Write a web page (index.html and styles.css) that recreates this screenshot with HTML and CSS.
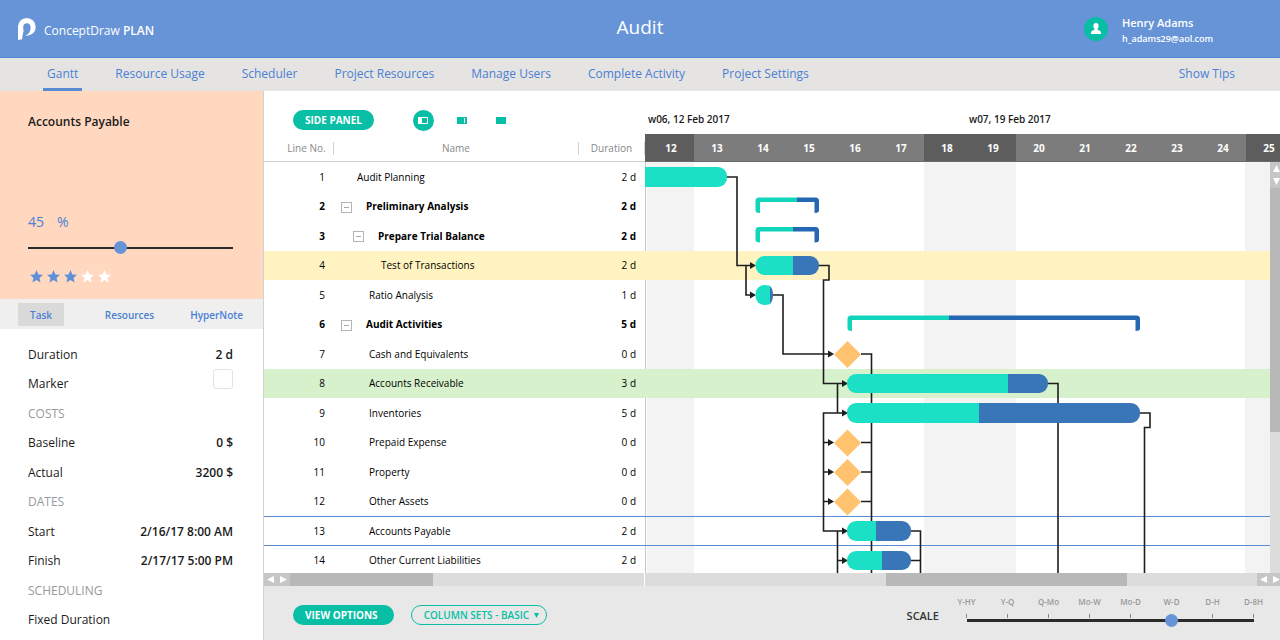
FILE: index.html
```html
<!DOCTYPE html>
<html lang="en">
<head>
    <meta charset="utf-8">
    <title>Audit - ConceptDraw PLAN</title>
    <link rel="stylesheet" href="styles.css">
</head>
<body>
    <header class="topbar">
        <div class="brand">
            <svg class="logo" width="18" height="22" viewBox="0 0 18 22">
                <path fill="#fff" d="M0 22V9A8.8 8.8 0 0 1 8.9 0 8.8 8.8 0 0 1 17.7 8.8C17.7 14.2 13.6 18 7.2 17.8 10.6 16.4 12.6 13.6 12.6 9.4A3.8 3.8 0 0 0 8.9 5.2C6.6 5.2 5.2 6.8 5.2 9.2 5.2 12 6 12.500 5 15.500 4.400 17.500 4.300 19 4.300 21.200Z"/>
            </svg>
            <span>ConceptDraw <b>PLAN</b></span>
        </div>
        <h1>Audit</h1>
        <div class="user">
            <svg class="avatar" width="24" height="24" viewBox="0 0 24 24">
                <circle cx="12" cy="12" r="12" fill="#08bea5"/>
                <path fill="#fff" d="M12 6a2.600 2.800 0 0 1 2.600 2.900c0 1.300-.6 2.300-1.200 2.900v.9c2 .5 3.600 1.300 3.600 3.300v1H7v-1c0-2 1.600-2.800 3.600-3.300v-.9c-.6-.6-1.200-1.600-1.200-2.900A2.600 2.800 0 0 1 12 6z"/>
            </svg>
            <div class="user-info">
                <div class="user-name">Henry Adams</div>
                <div class="user-mail">h_adams29@aol.com</div>
            </div>
        </div>
    </header>

    <nav class="tabs">
        <a href="#" class="active">Gantt</a>
        <a href="#">Resource Usage</a>
        <a href="#">Scheduler</a>
        <a href="#">Project Resources</a>
        <a href="#">Manage Users</a>
        <a href="#">Complete Activity</a>
        <a href="#">Project Settings</a>
        <a href="#" class="tips">Show Tips</a>
    </nav>

    <div class="workspace">
        <aside class="sidebar">
            <section class="task-card">
                <h2>Accounts Payable</h2>
                <label class="percent" for="complete"><span>45</span><span>%</span></label>
                <input type="range" id="complete" class="slider" min="0" max="100" value="45">
                <svg class="stars" width="84" height="13" viewBox="0 0 84 13">
                    <defs>
                        <path id="star" d="M6.500 0l1.900 4.400 4.600.4-3.500 3.100 1.100 4.700-4.100-2.500-4.100 2.500 1.100-4.700L0 4.800l4.600-.4z"/>
                    </defs>
                    <g fill="#5f90d8">
                        <use href="#star"/>
                        <use href="#star" x="17"/>
                        <use href="#star" x="34"/>
                    </g>
                    <g fill="#fff">
                        <use href="#star" x="51"/>
                        <use href="#star" x="68"/>
                    </g>
                </svg>
            </section>

            <div class="side-tabs">
                <button class="active">Task</button>
                <button class="push">Resources</button>
                <button>HyperNote</button>
            </div>

            <div class="props">
                <div class="prop"><span>Duration</span><b>2 d</b></div>
                <div class="prop"><label for="marker">Marker</label><input type="checkbox" id="marker"></div>
                <div class="prop group">COSTS</div>
                <div class="prop"><span>Baseline</span><b>0 $</b></div>
                <div class="prop"><span>Actual</span><b>3200 $</b></div>
                <div class="prop group">DATES</div>
                <div class="prop"><span>Start</span><b>2/16/17 8:00 AM</b></div>
                <div class="prop"><span>Finish</span><b>2/17/17 5:00 PM</b></div>
                <div class="prop group">SCHEDULING</div>
                <div class="prop"><span>Fixed Duration</span></div>
            </div>
        </aside>

        <main class="main">
            <div class="panes">
                <section class="outline">
                    <div class="toolbar">
                        <button class="pill">SIDE PANEL</button>
                        <button class="view view-on" aria-label="Left panel">
                            <svg width="10" height="7"><path fill="none" stroke="#fff" d="M.5.5h9v6h-9z"/><path fill="#fff" d="M0 0h4v7H0z"/></svg>
                        </button>
                        <button class="view" aria-label="Right panel">
                            <svg width="10" height="7"><path fill="#08bea5" d="M0 0h10v7H0z"/><path fill="#fff" d="M7 1h1v5H7z"/></svg>
                        </button>
                        <button class="view" aria-label="Full width">
                            <svg width="10" height="7"><path fill="#08bea5" d="M0 0h10v7H0z"/></svg>
                        </button>
                    </div>
                    <div class="rows">
                        <table>
                            <thead>
                                <tr>
                                    <th class="col-line"><span>Line No.</span></th>
                                    <th class="col-name"><span>Name</span></th>
                                    <th class="col-duration"><span>Duration</span></th>
                                </tr>
                            </thead>
                            <tbody>
                                <tr><td>1</td><td class="task">Audit Planning</td><td>2 d</td></tr>
                                <tr class="summary"><td>2</td><td class="level-1"><button class="toggle" aria-label="Collapse"></button>Preliminary Analysis</td><td>2 d</td></tr>
                                <tr class="summary"><td>3</td><td class="level-2"><button class="toggle" aria-label="Collapse"></button>Prepare Trial Balance</td><td>2 d</td></tr>
                                <tr class="yellow"><td>4</td><td class="task level-2">Test of Transactions</td><td>2 d</td></tr>
                                <tr><td>5</td><td class="task level-1">Ratio Analysis</td><td>1 d</td></tr>
                                <tr class="summary"><td>6</td><td class="level-1"><button class="toggle" aria-label="Collapse"></button>Audit Activities</td><td>5 d</td></tr>
                                <tr><td>7</td><td class="task level-1">Cash and Equivalents</td><td>0 d</td></tr>
                                <tr class="green"><td>8</td><td class="task level-1">Accounts Receivable</td><td>3 d</td></tr>
                                <tr><td>9</td><td class="task level-1">Inventories</td><td>5 d</td></tr>
                                <tr><td>10</td><td class="task level-1">Prepaid Expense</td><td>0 d</td></tr>
                                <tr><td>11</td><td class="task level-1">Property</td><td>0 d</td></tr>
                                <tr><td>12</td><td class="task level-1">Other Assets</td><td>0 d</td></tr>
                                <tr class="selected"><td>13</td><td class="task level-1">Accounts Payable</td><td>2 d</td></tr>
                                <tr><td>14</td><td class="task level-1">Other Current Liabilities</td><td>2 d</td></tr>
                            </tbody>
                        </table>
                    </div>
                    <div class="hscroll">
                        <svg class="arrows" width="26" height="13"><path fill="#fff" d="M10 3v7L3 6.500zM16 3v7l7-3.500z"/></svg>
                        <div class="thumb"></div>
                    </div>
                </section>

                <section class="chart">
                    <div class="weeks">
                        <span>w06, 12 Feb 2017</span>
                        <span>w07, 19 Feb 2017</span>
                    </div>
                    <div class="days">
                        <span class="weekend">12</span>
                        <span>13</span>
                        <span>14</span>
                        <span>15</span>
                        <span>16</span>
                        <span>17</span>
                        <span class="weekend">18</span>
                        <span class="weekend">19</span>
                        <span>20</span>
                        <span>21</span>
                        <span>22</span>
                        <span>23</span>
                        <span>24</span>
                        <span class="weekend">25</span>
                    </div>
                    <div class="chart-body">
                        <svg class="bars" height="411">
                            <defs>
                                <path id="arrow" d="M0 0l-6-3.500v7z"/>
                                <path id="milestone" d="M0-13.500L13.500 0 0 13.500-13.500 0z"/>
                            </defs>

                            <!-- weekends -->
                            <g fill="#f3f3f3">
                                <rect x="2" width="47" height="411"/>
                                <rect x="279" width="92" height="411"/>
                                <rect x="600" width="46" height="411"/>
                            </g>

                            <!-- marked rows -->
                            <rect y="89" width="100%" height="29" fill="#fff4c1"/>
                            <rect y="207" width="100%" height="29" fill="#d6f1cc"/>
                            <rect y="354" width="100%" height="1" fill="#5b8bd2"/>
                            <rect y="383" width="100%" height="1" fill="#5b8bd2"/>

                            <!-- links -->
                            <g fill="none" stroke="#1e1e1e" stroke-width="1.600">
                                <path d="M82 15H92V103.500H108"/>
                                <path d="M101 103.500V133H108"/>
                                <path d="M174 103.500H184V118H178.500V221.500H200"/>
                                <path d="M128 133H138V192H187"/>
                                <path d="M216 192H226.500V411"/>
                                <path d="M192.500 221.500V251"/>
                                <path d="M200 251H178.500V369H200"/>
                                <path d="M178.500 280.500H187M178.500 310H187M178.500 339.500H187"/>
                                <path d="M216 280.500H226.500M216 310H226.500M216 339.500H226.500"/>
                                <path d="M192.500 369V411M192.500 398.500H200"/>
                                <path d="M403 221.500H413V411"/>
                                <path d="M495 251H505V265.500H499.500V411"/>
                                <path d="M266 369H275.500V411M266 398.500H275.500"/>
                            </g>
                            <g fill="#1e1e1e">
                                <use href="#arrow" x="111" y="103.500"/>
                                <use href="#arrow" x="111" y="133"/>
                                <use href="#arrow" x="189" y="192"/>
                                <use href="#arrow" x="203" y="221.500"/>
                                <use href="#arrow" x="203" y="251"/>
                                <use href="#arrow" x="189" y="280.500"/>
                                <use href="#arrow" x="189" y="310"/>
                                <use href="#arrow" x="189" y="339.500"/>
                                <use href="#arrow" x="203" y="369"/>
                                <use href="#arrow" x="203" y="398.500"/>
                            </g>

                            <!-- done part -->
                            <g fill="#1ce0c5">
                                <path d="M0 5H73a9 9 0 0 1 9 9v2a9 9 0 0 1-9 9H0z"/>
                                <path d="M148 94H119.500a9 9 0 0 0-9 9v1a9 9 0 0 0 9 9H148z"/>
                                <path d="M125 123.700Q122 123 119 123a8.500 9 0 0 0-8.500 9v2a8.500 9 0 0 0 8.500 9Q122 143 125 142.300z"/>
                                <path d="M363 212H211a9 9 0 0 0-9 9v1a9 9 0 0 0 9 9H363z"/>
                                <path d="M334 241H211a9 9 0 0 0-9 9v2a9 9 0 0 0 9 9H334z"/>
                                <path d="M231 359H211a9 9 0 0 0-9 9v2a9 9 0 0 0 9 9H231z"/>
                                <path d="M237 389H211a9 9 0 0 0-9 9v1a9 9 0 0 0 9 9H237z"/>
                            </g>
                            <!-- remaining part -->
                            <g fill="#3876b7">
                                <path d="M148 94H165a9 9 0 0 1 9 9v1a9 9 0 0 1-9 9H148z"/>
                                <path d="M125 124Q128 127 128 133T125 142z"/>
                                <path d="M363 212H394a9 9 0 0 1 9 9v1a9 9 0 0 1-9 9H363z"/>
                                <path d="M334 241H486a9 9 0 0 1 9 9v2a9 9 0 0 1-9 9H334z"/>
                                <path d="M231 359H257a9 9 0 0 1 9 9v2a9 9 0 0 1-9 9H231z"/>
                                <path d="M237 389H257a9 9 0 0 1 9 9v1a9 9 0 0 1-9 9H237z"/>
                            </g>

                            <!-- summary brackets -->
                            <g fill="#10d5ba">
                                <path d="M152 35.500H114q-3.500 0-3.500 3.500v9.500q0 2.500 4.500 2.500V40h37z"/>
                                <path d="M148 65H114q-3.500 0-3.500 3.500V78q0 2.500 4.500 2.500v-11h33z"/>
                                <path d="M304 153.500H206q-3.500 0-3.500 3.500v9.500q0 2.500 4.500 2.500v-11h97z"/>
                            </g>
                            <g fill="#2567b2">
                                <path d="M152 35.500h18.500q3.500 0 3.500 3.500v9.500q0 2.500-4.500 2.500V40H152z"/>
                                <path d="M148 65h22.500q3.500 0 3.500 3.500V78q0 2.500-4.500 2.500v-11H148z"/>
                                <path d="M304 153.500h187.500q3.500 0 3.500 3.500v9.500q0 2.500-4.500 2.500v-11H304z"/>
                            </g>

                            <g fill="#ffc26e">
                                <use href="#milestone" x="202.500" y="192.500"/>
                                <use href="#milestone" x="202.500" y="281"/>
                                <use href="#milestone" x="202.500" y="310.500"/>
                                <use href="#milestone" x="202.500" y="340"/>
                            </g>
                        </svg>
                        <div class="vscroll">
                            <svg class="arrows" width="13" height="26"><path fill="#fff" d="M3 10h7L6.500 3zM3 16h7l-3.500 7z"/></svg>
                            <div class="thumb"></div>
                        </div>
                    </div>
                    <div class="hscroll">
                        <div class="thumb"></div>
                        <svg class="arrows" width="23" height="13"><path fill="#fff" d="M10 3v7L3 6.500zM16 3v7l7-3.500z"/></svg>
                    </div>
                </section>
            </div>

            <footer class="bottombar">
                <button class="pill">VIEW OPTIONS</button>
                <div class="column-sets">
                    <select aria-label="Column sets">
                        <option>COLUMN SETS - BASIC</option>
                    </select>
                    <svg width="5" height="5"><path fill="#08bea5" d="M0 0h5L2.500 5z"/></svg>
                </div>
                <label class="scale-label" for="scale">SCALE</label>
                <div class="scale">
                    <div class="ticks">
                        <span>Y-HY</span>
                        <span>Y-Q</span>
                        <span>Q-Mo</span>
                        <span>Mo-W</span>
                        <span>Mo-D</span>
                        <span>W-D</span>
                        <span>D-H</span>
                        <span>D-8H</span>
                    </div>
                    <input type="range" id="scale" class="slider thick" min="0" max="7" value="5">
                </div>
            </footer>
        </main>
    </div>
</body>
</html>
```
FILE: styles.css
```css
* {
    box-sizing: border-box;
}
body {
    margin: 0;
    height: 100vh;
    display: flex;
    flex-direction: column;
    overflow: hidden;
    font-family: "Open Sans", "Noto Sans", sans-serif;
    font-size: 12px;
    color: #1a1a1a;
    background: #fff;
}
button, select, input {
    font-family: inherit;
    margin: 0;
}
button {
    border: 0;
    padding: 0;
    background: none;
    cursor: pointer;
}
svg {
    display: block;
    flex: none;
}
b {
    font-weight: 600;
}

/* top bar */
.topbar {
    display: grid;
    grid-template-columns: 1fr auto 1fr;
    align-items: center;
    height: 58px;
    flex: none;
    padding: 0 18px;
    color: #fff;
    background: #6694d7;
    border-bottom: 1px solid #5387d3;
}
.brand {
    display: flex;
    align-items: center;
    gap: 8px;
}
.brand span {
    padding-top: 3px;
}
.topbar h1 {
    margin: 0;
    padding-bottom: 4px;
    font-size: 19px;
    font-weight: 400;
}
.user {
    display: flex;
    align-items: center;
    justify-content: flex-end;
    gap: 14px;
}
.user-info {
    width: 140px;
    padding-top: 4px;
    font-weight: 600;
}
.user-name {
    font-size: 11px;
    line-height: 17px;
}
.user-mail {
    font-size: 9px;
    line-height: 16px;
}

/* main tabs */
.tabs {
    display: flex;
    flex: none;
    gap: 29px;
    height: 33px;
    padding: 0 41px 0 43px;
    background: #e5e4e2;
}
.tabs a {
    padding: 0 4px;
    line-height: 31px;
    color: #4a80d3;
    text-decoration: none;
}
.tabs .active {
    border-bottom: 3px solid #5a8cd6;
}
.tabs .tips {
    margin-left: auto;
}

.workspace {
    display: flex;
    flex: 1;
    min-height: 0;
}

/* sidebar */
.sidebar {
    width: 264px;
    flex: none;
    border-right: 1px solid #d2d2d2;
}
.task-card {
    display: flex;
    flex-direction: column;
    padding: 22px 30px 16px 28px;
    background: #ffd8bf;
}
.task-card h2 {
    margin: 0 0 81px;
    font-size: 12px;
    line-height: 18px;
    font-weight: 600;
}
.percent {
    display: flex;
    gap: 13px;
    font-size: 14px;
    line-height: 20px;
    color: #4a80d3;
}
.task-card .slider {
    margin: 9px -6px 16px;
}
.stars {
    margin-left: 2px;
}
.slider {
    appearance: none;
    height: 13px;
    background: linear-gradient(#2b2b2b, #2b2b2b) center / calc(100% - 12px) 2px no-repeat;
}
.slider::-webkit-slider-thumb {
    appearance: none;
    width: 13px;
    height: 13px;
    border-radius: 50%;
    background: #6694d7;
}
.slider.thick {
    background-size: calc(100% - 13px) 3px;
}
.side-tabs {
    display: flex;
    gap: 16px;
    height: 30px;
    padding: 4px 10px 3px 18px;
    background: #efefef;
}
.side-tabs button {
    padding: 0 10px;
    font-size: 10px;
    font-weight: 600;
    color: #4a80d3;
}
.side-tabs .active {
    padding: 0 12px;
    background: #dadada;
}
.side-tabs .push {
    margin-left: auto;
}
.props {
    padding: 11px 30px 0 28px;
}
.prop {
    display: flex;
    justify-content: space-between;
    height: 29px;
    line-height: 29px;
}
.prop:nth-child(even) {
    height: 30px;
    line-height: 30px;
}
.prop.group {
    color: #999;
}
.prop input {
    appearance: none;
    width: 20px;
    height: 20px;
    border: 1px solid #e2e2e2;
    border-radius: 3px;
    background: #fff;
}

/* task table */
.main {
    display: flex;
    flex-direction: column;
    flex: 1;
    min-width: 0;
}
.panes {
    display: flex;
    flex: 1;
    min-height: 0;
}
.outline {
    display: flex;
    flex-direction: column;
    width: 381px;
    flex: none;
}
.toolbar {
    display: flex;
    align-items: center;
    height: 43px;
    flex: none;
    padding: 15px 0 0 29px;
}
.pill {
    height: 20px;
    padding: 0 12px;
    border-radius: 10px;
    font-size: 10px;
    font-weight: 700;
    color: #fff;
    background: #08bea5;
}
.view {
    display: flex;
    align-items: center;
    justify-content: center;
    width: 21px;
    height: 21px;
    margin-right: 18px;
    border-radius: 50%;
}
.view-on {
    margin-left: 39px;
    background: #08bea5;
}
.rows {
    flex: 1;
    min-height: 0;
    overflow: hidden;
}
table {
    width: 100%;
    table-layout: fixed;
    border-collapse: separate;
    border-spacing: 0;
    font-size: 10px;
    color: #000;
}
th {
    height: 28px;
    padding: 2px 0 0;
    border-bottom: 1px solid #d2d2d2;
    font-weight: 400;
    color: #888;
}
th span {
    display: block;
    border-right: 1px solid #d2d2d2;
    line-height: 13px;
}
.col-line {
    width: 70px;
}
.col-line span {
    padding-left: 16px;
}
.col-duration {
    width: 66px;
}
td {
    height: 29px;
    padding: 0 0 1px;
}
tbody tr:nth-child(odd) td {
    height: 30px;
}
td:first-child, td:last-child {
    text-align: right;
    padding-right: 9px;
}
.task {
    padding-left: 23px;
}
.level-1 {
    padding-left: 7px;
}
.level-2 {
    padding-left: 19px;
}
.task.level-1 {
    padding-left: 35px;
}
.task.level-2 {
    padding-left: 47px;
}
.summary {
    font-weight: 700;
}
.toggle {
    display: inline-flex;
    align-items: center;
    justify-content: center;
    width: 11px;
    height: 11px;
    margin-right: 14px;
    border: 1px solid #b4b4b4;
    vertical-align: middle;
}
.toggle::before {
    content: "";
    width: 5px;
    height: 1px;
    background: #aaa;
}
.yellow {
    background: #fff4c1;
}
.green {
    background: #d6f1cc;
}
.selected td {
    box-shadow: inset 0 1px #5b8bd2, inset 0 -1px #5b8bd2;
}

/* scroll bars */
.hscroll {
    display: flex;
    height: 13px;
    flex: none;
    background: #dcdcdc;
}
.arrows {
    background: #c6c6c6;
}
.thumb {
    background: #b8b8b8;
}
.outline .hscroll {
    border-right: 1px solid #fff;
}
.outline .thumb {
    width: 143px;
}
.chart .hscroll {
    justify-content: flex-end;
}
.chart .hscroll .thumb {
    width: 241px;
    margin-right: 130px;
}
.vscroll {
    width: 10px;
    flex: none;
    overflow: hidden;
    background: #dcdcdc;
}
.vscroll .thumb {
    height: 244px;
}

/* chart */
.chart {
    display: flex;
    flex-direction: column;
    flex: 1;
    min-width: 0;
}
.weeks {
    display: flex;
    height: 43px;
    flex: none;
    padding: 20px 0 0 3px;
    overflow: hidden;
    font-size: 10px;
    line-height: 16px;
    font-weight: 600;
}
.weeks span {
    width: 321px;
    flex: none;
}
.days {
    display: flex;
    height: 28px;
    flex: none;
    overflow: hidden;
    border-bottom: 1px solid #6a6a6a;
    font-size: 10px;
    line-height: 28px;
    font-weight: 700;
    text-align: center;
    color: #fff;
    background: #7c7c7c;
}
.days span {
    width: 46px;
    flex: none;
}
.days span:first-child {
    width: 49px;
    padding-left: 3px;
}
.days .weekend {
    background: #5d5d5d;
}
.chart-body {
    display: flex;
    flex: 1;
    min-height: 0;
    box-shadow: inset 1px 0 #c8c8c8;
}
.bars {
    flex: 1;
    min-width: 0;
}

/* bottom bar */
.bottombar {
    display: flex;
    align-items: center;
    height: 54px;
    flex: none;
    padding: 0 6px 0 29px;
    background: #e8e8e8;
}
.bottombar .pill {
    margin-top: 4px;
    padding-right: 16px;
}
.column-sets {
    display: flex;
    align-items: center;
    height: 20px;
    margin: 4px 0 0 17px;
    padding: 0 7px 0 12px;
    border: 1px solid #08bea5;
    border-radius: 10px;
}
.column-sets select {
    appearance: none;
    width: 110px;
    padding: 0;
    border: 0;
    font-size: 10px;
    font-weight: 600;
    color: #08bea5;
    background: none;
}
.scale-label {
    margin: 4px 7px 0 auto;
    font-size: 11px;
    font-weight: 600;
    color: #333;
}
.scale {
    width: 328px;
    padding-bottom: 4px;
}
.ticks {
    display: flex;
    font-size: 8px;
    line-height: 13px;
    font-weight: 600;
    text-align: center;
    color: #999;
}
.ticks span {
    flex: 1;
}
.ticks span::after {
    content: "";
    display: block;
    width: 1px;
    height: 4px;
    margin: 6px auto 0;
    background: #888;
}
.scale .slider {
    display: block;
    width: 300px;
    margin: -4px 0 0 14px;
}
```
